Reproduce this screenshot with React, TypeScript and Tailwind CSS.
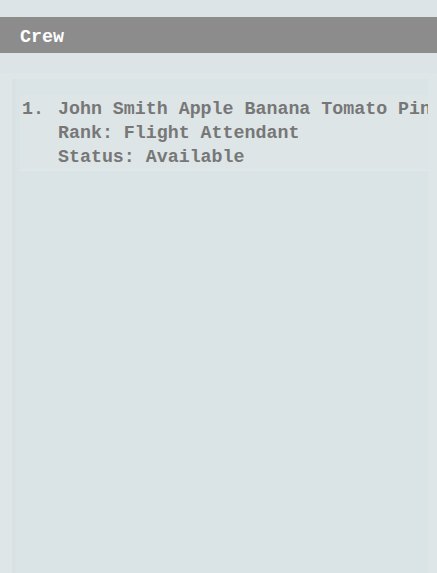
export default function App() {
  return (
    <div className="min-h-[573px] bg-[#dce4e7] pt-[17px]" style={{ fontFamily: '"Liberation Mono", monospace' }}>
      <div className="h-[36px] bg-[#8c8c8c] flex items-center px-[20px] pt-[5px] text-[18.3px] font-bold text-white">Crew</div>
      <div className="mt-[20px] bg-[#dee6e8] pl-[12px] pr-[9px] pt-[6px] h-[500px]">
        <div className="h-full border-l-[4px] border-[#d9e1e3] bg-[#dae3e5] pt-[16px] pl-[4px]">
          <ol className="bg-[#dde5e7] border-b-[2px] border-[#e0e7e9] pt-[2px]">
            <li className="flex text-[18.3px] font-bold text-[#777777] leading-[24px]">
              <span className="w-[38px] shrink-0 pl-[2px]">1.</span>
              <div className="whitespace-nowrap overflow-hidden">
                <div>John Smith Apple Banana Tomato Pineapple</div>
                <div>Rank: Flight Attendant</div>
                <div>Status: Available</div>
              </div>
            </li>
          </ol>
        </div>
      </div>
    </div>
  );
}
